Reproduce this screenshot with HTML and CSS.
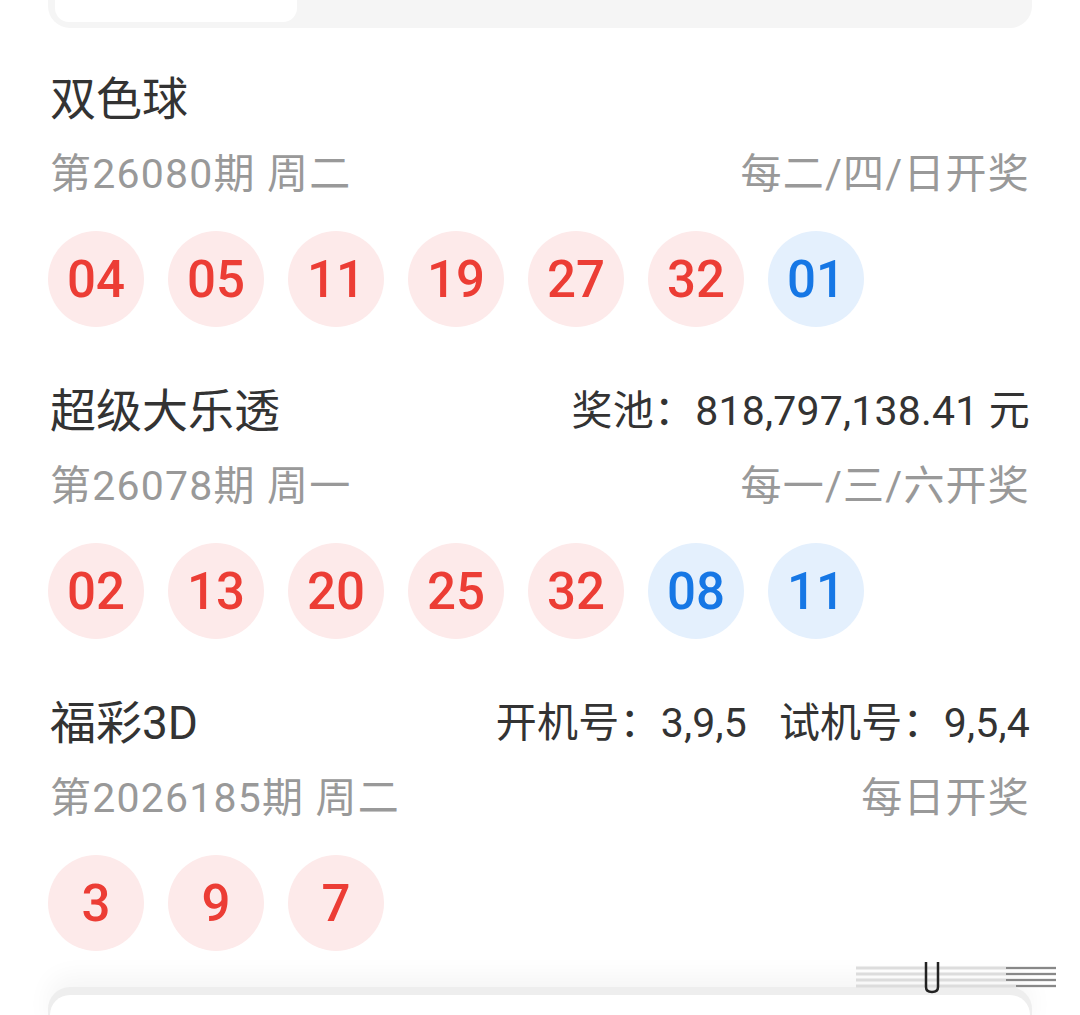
FILE: index.html
```html
<!DOCTYPE html>
<html lang="zh-CN">
<head>
    <meta charset="UTF-8">
    <title>开奖结果</title>
    <link rel="stylesheet" href="styles.css">
</head>
<body>
<main class="page">
    <div class="top-card">
        <div class="top-tab"></div>
    </div>

    <section class="lottery">
        <div class="row">
            <h3 class="name">双色球</h3>
        </div>
        <div class="row sub">
            <span>第26080期 周二</span>
            <span>每二/四/日开奖</span>
        </div>
        <div class="balls">
            <span class="ball red">04</span>
            <span class="ball red">05</span>
            <span class="ball red">11</span>
            <span class="ball red">19</span>
            <span class="ball red">27</span>
            <span class="ball red">32</span>
            <span class="ball blue">01</span>
        </div>
    </section>

    <section class="lottery">
        <div class="row">
            <h3 class="name">超级大乐透</h3>
            <span class="extra">奖池：818,797,138.41 元</span>
        </div>
        <div class="row sub">
            <span>第26078期 周一</span>
            <span>每一/三/六开奖</span>
        </div>
        <div class="balls">
            <span class="ball red">02</span>
            <span class="ball red">13</span>
            <span class="ball red">20</span>
            <span class="ball red">25</span>
            <span class="ball red">32</span>
            <span class="ball blue">08</span>
            <span class="ball blue">11</span>
        </div>
    </section>

    <section class="lottery">
        <div class="row">
            <h3 class="name">福彩3D</h3>
            <span class="extra">开机号：3,9,5<span class="gap">试机号：9,5,4</span></span>
        </div>
        <div class="row sub">
            <span>第2026185期 周二</span>
            <span>每日开奖</span>
        </div>
        <div class="balls">
            <span class="ball red">3</span>
            <span class="ball red">9</span>
            <span class="ball red">7</span>
        </div>
    </section>

    <div class="next-card">
        <div class="next-inner"></div>
    </div>
</main>
<svg class="mark" width="200" height="34" viewBox="0 0 200 34">
    <g stroke="#dcdcdc" stroke-width="3">
        <line x1="0" y1="7" x2="200" y2="7"/>
        <line x1="0" y1="13" x2="200" y2="13"/>
        <line x1="0" y1="19" x2="200" y2="19"/>
        <line x1="0" y1="25" x2="200" y2="25"/>
    </g>
    <g stroke="#888" stroke-width="2">
        <line x1="150" y1="7" x2="200" y2="7"/>
        <line x1="150" y1="13" x2="200" y2="13"/>
        <line x1="150" y1="19" x2="200" y2="19"/>
        <line x1="160" y1="25" x2="200" y2="25"/>
    </g>
    <path d="M70 1 V26 Q70 31 76 31 Q82 31 82 26 V1" fill="none" stroke="#222" stroke-width="2.5"/>
</svg>
</body>
</html>
```

FILE: styles.css
```css
html,body{
    margin: 0;
    background: #fff;
}
body{
    width: 1080px;
    height: 1015px;
    overflow: hidden;
    position: relative;
    font-family: Roboto, "Noto Sans CJK SC", sans-serif;
}
.page{
    padding: 0 48px;
}
.top-card{
    height: 28px;
    background: #f5f5f5;
    border-radius: 0 0 22px 22px;
    padding: 0 0 0 7px;
}
.top-tab{
    width: 242px;
    height: 22px;
    background: #fff;
    border-radius: 0 0 14px 14px;
}
.lottery{
    margin-top: 37px;
}
.lottery + .lottery{
    margin-top: 50px;
}
.row{
    display: flex;
    justify-content: space-between;
    align-items: center;
    height: 60px;
    padding: 0 2px;
}
.name{
    margin: 0;
    font-size: 46px;
    font-weight: 400;
    color: #333;
}
.extra{
    font-size: 41px;
    letter-spacing: 0.2px;
    color: #333;
}
.gap{
    margin-left: 32px;
}
.sub{
    height: 50px;
    margin-top: 20px;
    font-size: 41px;
    letter-spacing: 1.2px;
    color: #999;
}
.balls{
    display: flex;
    gap: 24px;
    margin-top: 36px;
}
.ball{
    width: 96px;
    height: 96px;
    border-radius: 50%;
    display: flex;
    align-items: center;
    justify-content: center;
    font-size: 51px;
    font-weight: 500;
}
.red{
    background: #fdeaea;
    color: #ec3d35;
}
.blue{
    background: #e4f0fd;
    color: #1677e5;
}
.next-card{
    margin-top: 36px;
    background: #eeeeee;
    border-radius: 22px 22px 0 0;
    padding-top: 8px;
    box-shadow: 0 -12px 24px rgba(0,0,0,0.04);
}
.next-inner{
    height: 40px;
    margin: 0 2px;
    background: #fff;
    border-radius: 20px 20px 0 0;
}
.mark{
    position: absolute;
    left: 856px;
    top: 961px;
}
```
